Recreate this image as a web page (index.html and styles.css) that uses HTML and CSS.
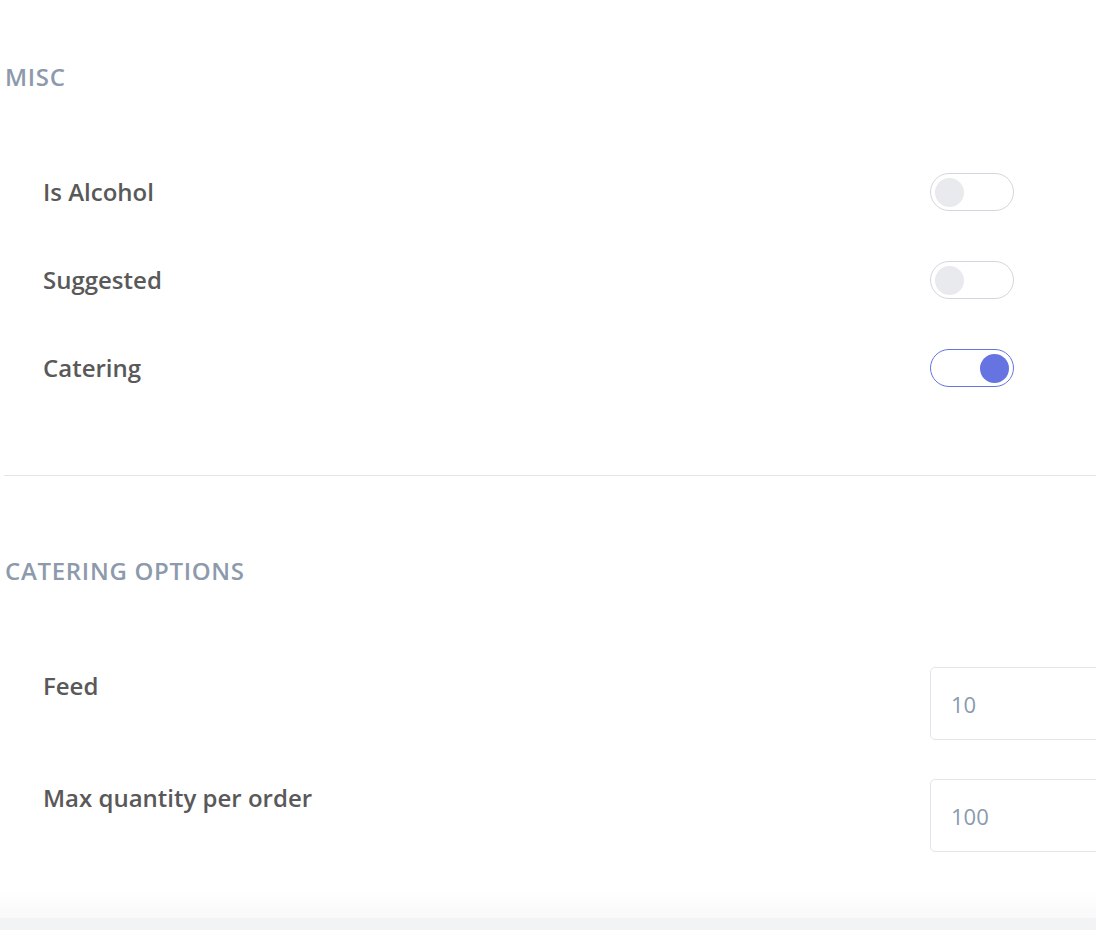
FILE: index.html
```html
<!DOCTYPE html>
<html lang="en">
<head>
  <meta charset="UTF-8">
  <meta name="viewport" content="width=device-width, initial-scale=1.0">
  <title>Product options</title>
  <link rel="stylesheet" href="styles.css">
</head>
<body>
  <div class="page">
    <!-- Misc flags -->
    <section class="section section-misc">
      <h2 class="section-title">Misc</h2>
      <div class="field-list">
        <div class="toggle-row">
          <span class="field-label">Is Alcohol</span>
          <span class="toggle"><span class="toggle-knob"></span></span>
        </div>
        <div class="toggle-row">
          <span class="field-label">Suggested</span>
          <span class="toggle"><span class="toggle-knob"></span></span>
        </div>
        <div class="toggle-row">
          <span class="field-label">Catering</span>
          <span class="toggle on"><span class="toggle-knob"></span></span>
        </div>
      </div>
    </section>

    <hr class="divider">

    <!-- Catering options -->
    <section class="section section-catering">
      <h2 class="section-title">Catering Options</h2>
      <div class="field-list">
        <div class="input-row">
          <label class="field-label" for="feed">Feed</label>
          <input class="text-input" id="feed" type="text" value="10">
        </div>
        <div class="input-row">
          <label class="field-label" for="max-qty">Max quantity per order</label>
          <input class="text-input" id="max-qty" type="text" value="100">
        </div>
      </div>
    </section>
  </div>

  <div class="footer-fade"></div>
  <div class="footer-bar"></div>
</body>
</html>
```

FILE: styles.css
```css
html, body {
  overflow: hidden;
}

body {
  font-family: 'Open Sans', 'Noto Sans', sans-serif;
  margin: 0;
  padding: 0;
  background-color: #fff;
  color: #595959;
  width: 1096px;
  height: 930px;
  display: flex;
  flex-direction: column;
}

.page {
  flex: 1;
  padding-left: 5px;
}

.section-misc {
  padding-top: 61px;
}

.section-catering {
  padding-top: 79px;
}

.section-title {
  margin: 0;
  font-size: 24px;
  line-height: 32px;
  font-weight: 600;
  letter-spacing: 0.7px;
  text-transform: uppercase;
  color: #8d9aab;
}

.field-list {
  padding-left: 38px;
}

.section-misc .field-list {
  margin-top: 55px;
}

.section-catering .field-list {
  margin-top: 80px;
}

.field-label {
  flex: 0 0 887px;
  font-size: 24px;
  line-height: 32px;
  font-weight: 600;
  color: #595959;
}

/* Toggle switches */
.toggle-row {
  display: flex;
  align-items: center;
  height: 88px;
}

.toggle {
  box-sizing: border-box;
  width: 84px;
  height: 38px;
  border: 1px solid #d3d6dc;
  border-radius: 19px;
  padding: 0 4px;
  display: flex;
  align-items: center;
  background-color: #fff;
}

.toggle-knob {
  width: 29px;
  height: 29px;
  border-radius: 50%;
  background-color: #e9eaee;
}

.toggle.on {
  border-color: #6574e1;
  justify-content: flex-end;
}

.toggle.on .toggle-knob {
  background-color: #6574e1;
}

.divider {
  margin: 63px 0 0 -1px;
  border: none;
  border-top: 1px solid #e4e4e4;
  height: 0;
}

/* Number inputs */
.input-row {
  display: flex;
  align-items: flex-start;
  margin-bottom: 39px;
}

.input-row .field-label {
  margin-top: 3px;
}

.text-input {
  box-sizing: border-box;
  flex: 0 0 300px;
  height: 73px;
  padding: 0 20px;
  border: 1px solid #e1e4e8;
  border-radius: 5px;
  font-family: inherit;
  font-size: 22px;
  color: #8a9aae;
  background-color: #fff;
}

.footer-fade {
  height: 31px;
  background: linear-gradient(to bottom, #fff, #f9f9fa);
}

.footer-bar {
  height: 14px;
  background-color: #f2f3f4;
}
```
